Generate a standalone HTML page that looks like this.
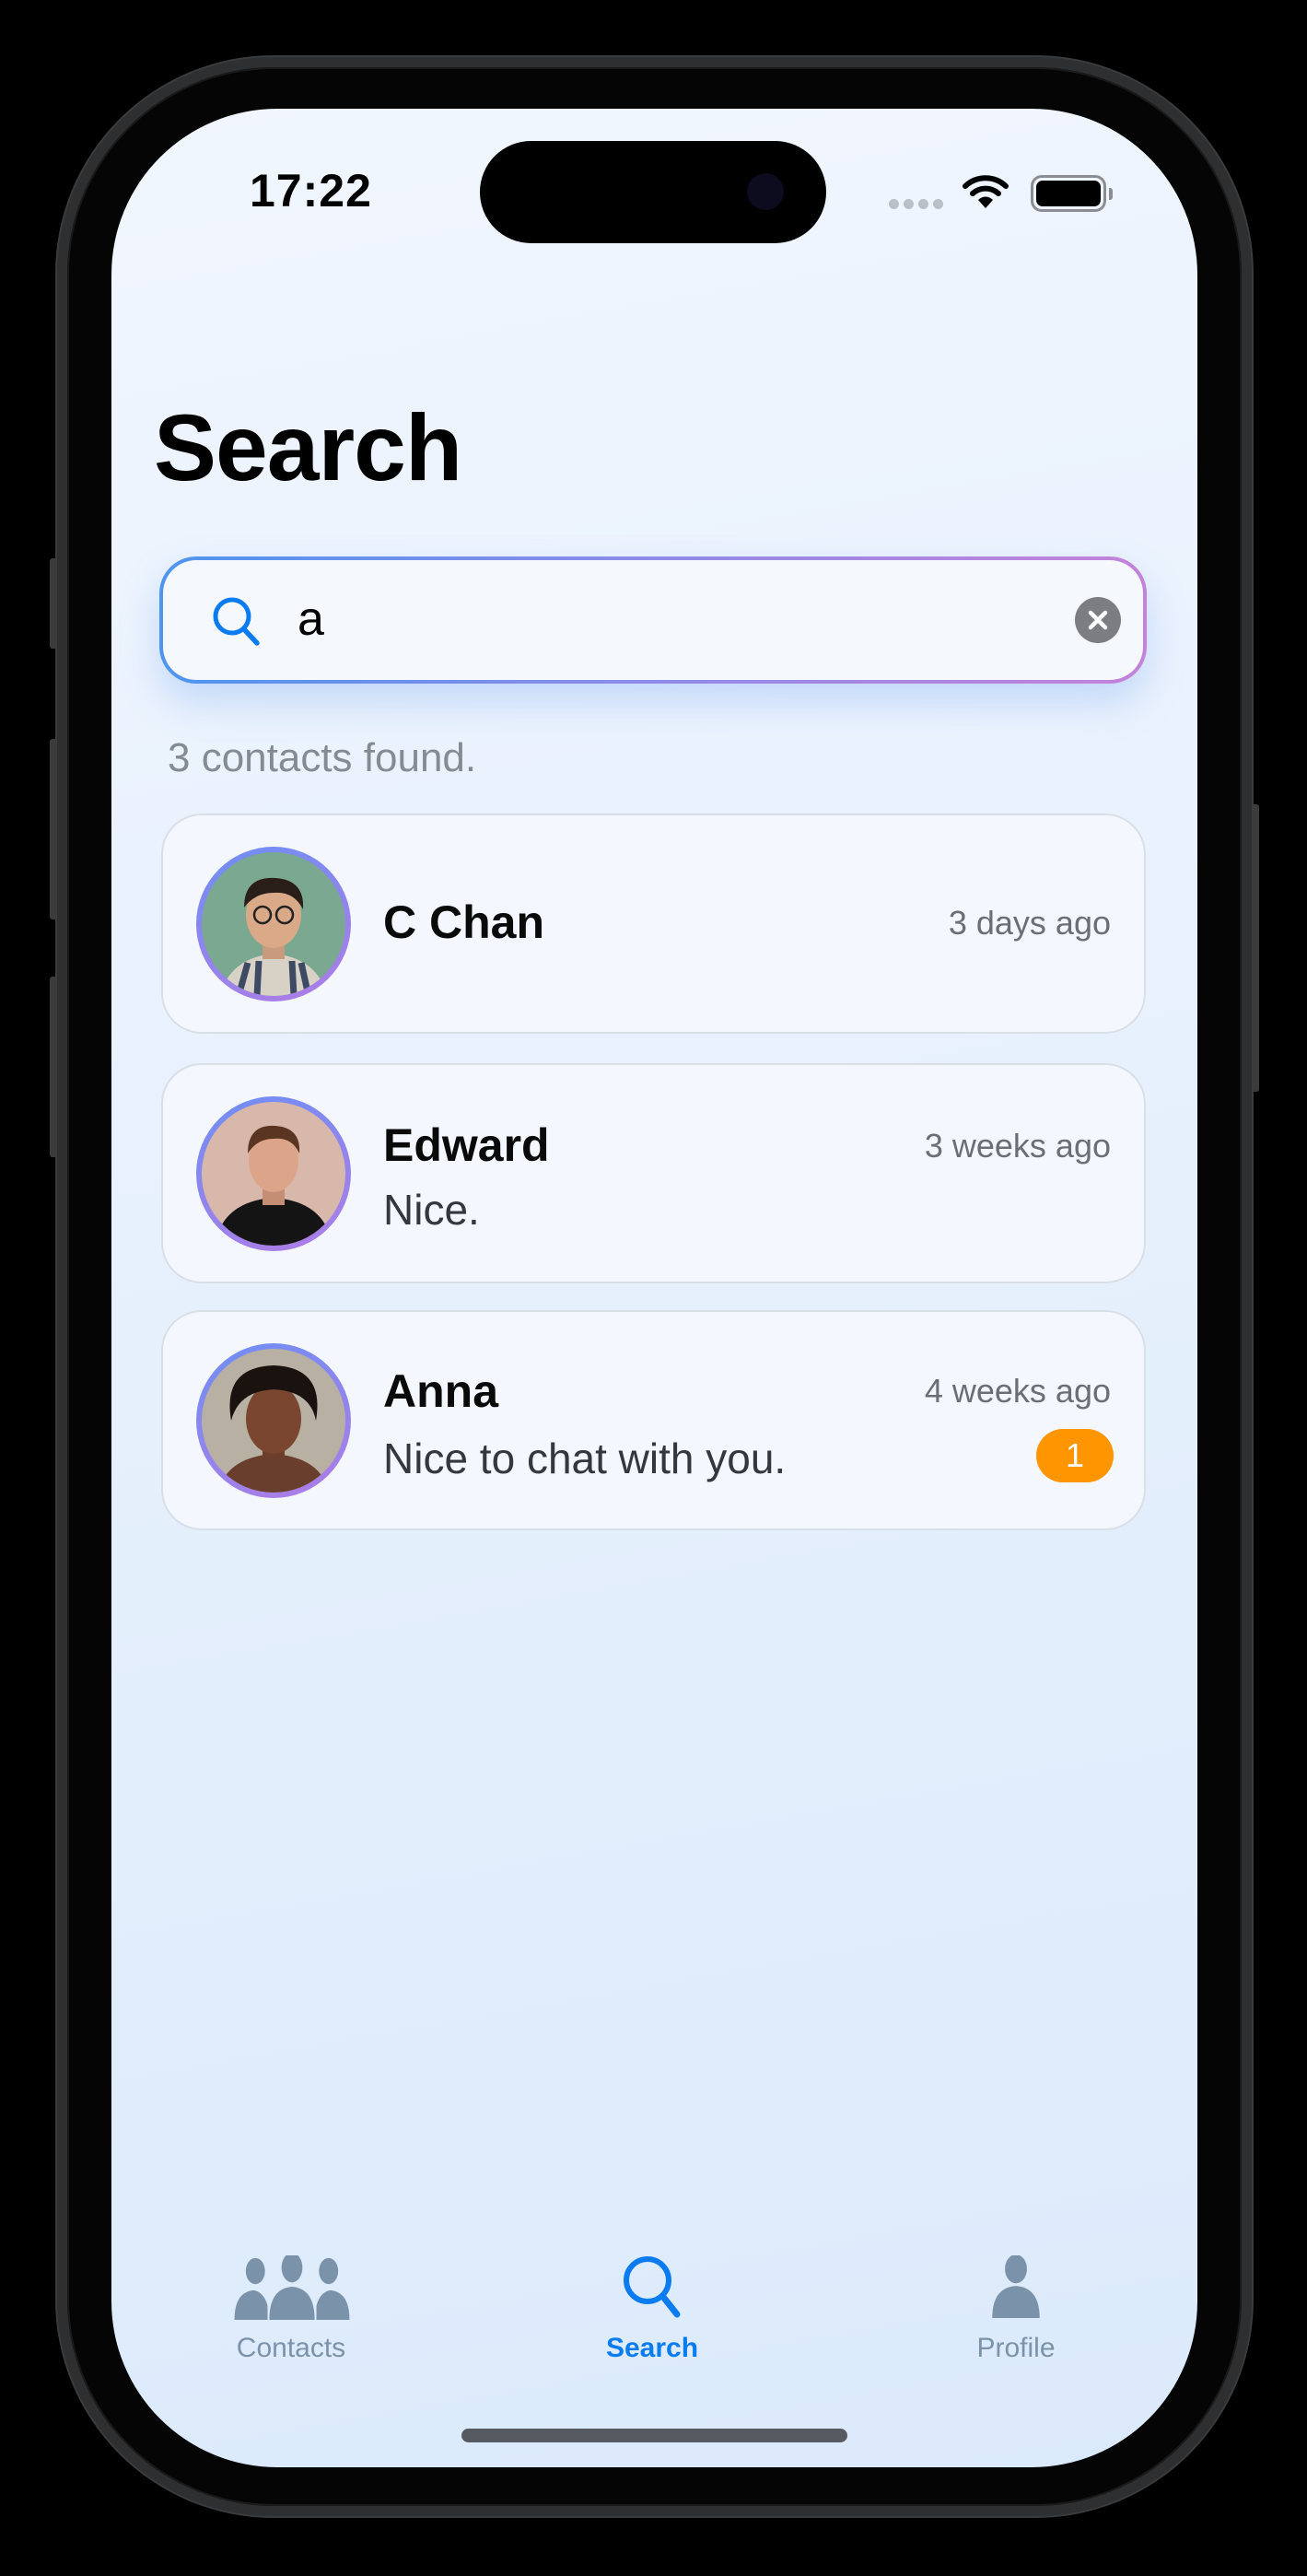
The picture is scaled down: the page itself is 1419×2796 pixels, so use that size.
<!DOCTYPE html>
<html><head><meta charset="utf-8"><style>
*{margin:0;padding:0;box-sizing:border-box}
html,body{width:1419px;height:2796px;background:#000;overflow:hidden;font-family:"Liberation Sans",sans-serif}
.abs{position:absolute}
.frame{left:62px;top:62px;width:1297px;height:2669px;border-radius:235px;background:#050505;border:11px solid #2e2f31;box-shadow:inset 0 0 0 2px #1a1a1a, 0 0 0 2px #3a3b3d}
.screen{left:121px;top:118px;width:1179px;height:2560px;border-radius:180px;background:linear-gradient(170deg,#f1f6fe 0%,#e8f1fd 40%,#dbeafb 100%);overflow:hidden}
.btn{background:#3a3b3d;border-radius:3px}
.card{left:54px;width:1069px;height:239px;border-radius:44px;background:#f4f8fe;border:2px solid #d9dfe7}
.av{left:36px;top:34px;width:168px;height:168px;border-radius:50%;background:linear-gradient(160deg,#6e8ff5,#b07ce6);padding:6px}
.av svg{width:156px;height:156px;border-radius:50%;display:block}
.name{left:239px;font-weight:bold;font-size:50px;color:#0a0a0a}
.time{right:36px;font-size:36px;color:#6a6e75}
.msg{left:239px;font-size:46px;color:#34373c}
.tab{font-size:30px;color:#7b93aa;text-align:center;width:200px}
</style></head><body>
<div class="abs btn" style="left:54px;top:606px;width:10px;height:98px"></div>
<div class="abs btn" style="left:54px;top:802px;width:10px;height:196px"></div>
<div class="abs btn" style="left:54px;top:1060px;width:10px;height:196px"></div>
<div class="abs btn" style="left:1357px;top:873px;width:10px;height:312px"></div>
<div class="abs frame"></div>
<div class="abs screen">
  <div class="abs" style="left:150px;top:60px;font-size:50px;font-weight:bold;color:#000;letter-spacing:1px">17:22</div>
  <div class="abs" style="left:400px;top:35px;width:376px;height:111px;border-radius:56px;background:#000"></div>
  <div class="abs" style="left:690px;top:70px;width:40px;height:40px;border-radius:50%;background:#0c0c1e"></div>
  <div class="abs" style="left:844px;top:98px;display:flex;gap:5px">
    <div style="width:11px;height:11px;border-radius:50%;background:#b9c0c9"></div><div style="width:11px;height:11px;border-radius:50%;background:#b9c0c9"></div><div style="width:11px;height:11px;border-radius:50%;background:#b9c0c9"></div><div style="width:11px;height:11px;border-radius:50%;background:#b9c0c9"></div>
  </div>
  <svg class="abs" style="left:924px;top:70px" width="50" height="40" viewBox="0 0 50 40"><path d="M3 14 A32 32 0 0 1 47 14" stroke="#000" stroke-width="6" fill="none" stroke-linecap="round"/><path d="M11 22 A21 21 0 0 1 39 22" stroke="#000" stroke-width="6" fill="none" stroke-linecap="round"/><path d="M25 38 L17 29 A11 11 0 0 1 33 29 Z" fill="#000"/></svg>
  <div class="abs" style="left:998px;top:72px;width:82px;height:40px;border:3px solid #8a8d92;border-radius:12px;padding:3px"><div style="width:100%;height:100%;background:#000;border-radius:7px"></div></div>
  <div class="abs" style="left:1083px;top:86px;width:4px;height:13px;background:#8a8d92;border-radius:0 3px 3px 0"></div>
  <div class="abs" style="left:46px;top:310px;font-size:102px;font-weight:bold;color:#000;letter-spacing:-1px">Search</div>
  <div class="abs" style="left:52px;top:486px;width:1072px;height:138px;border-radius:40px;background:linear-gradient(90deg,#4e95ef,#8f8be8,#c482da);padding:4px;box-shadow:0 20px 40px rgba(120,170,240,.35)">
    <div style="width:100%;height:100%;border-radius:36px;background:#f5f9fe;position:relative">
      <svg class="abs" style="left:52px;top:38px" width="58" height="58" viewBox="0 0 58 58"><circle cx="23" cy="23" r="18" stroke="#0a7cf0" stroke-width="5" fill="none"/><path d="M36 37 L50 52" stroke="#0a7cf0" stroke-width="5.5" stroke-linecap="round"/></svg>
      <div class="abs" style="left:146px;top:34px;font-size:52px;color:#000">a</div>
      <div class="abs" style="left:990px;top:40px;width:50px;height:50px;border-radius:50%;background:#7b7d80"></div>
      <svg class="abs" style="left:990px;top:40px" width="50" height="50" viewBox="0 0 50 50"><path d="M17 17L33 33M33 17L17 33" stroke="#fff" stroke-width="4.5" stroke-linecap="round"/></svg>
    </div>
  </div>
  <div class="abs" style="left:61px;top:680px;font-size:44px;color:#868b93">3 contacts found.</div>
  <div class="abs card" style="top:765px">
    <div class="abs av"><svg viewBox="0 0 156 156"><rect width="156" height="156" fill="#7aa890"/><path d="M20 156 Q30 115 78 110 Q126 115 136 156Z" fill="#d8d2c6"/><path d="M40 156 L50 120 M60 156 L62 118 M100 156 L98 118 M116 156 L108 120" stroke="#3c4a64" stroke-width="7"/><rect x="66" y="92" width="24" height="24" fill="#c99a7b"/><ellipse cx="78" cy="68" rx="30" ry="36" fill="#d9a988"/><path d="M46 60 Q46 26 80 28 Q112 30 110 62 Q100 42 78 44 Q58 44 46 60Z" fill="#2a1e18"/><circle cx="66" cy="68" r="9" stroke="#222" stroke-width="2.5" fill="none"/><circle cx="90" cy="68" r="9" stroke="#222" stroke-width="2.5" fill="none"/></svg></div>
    <div class="abs name" style="top:87px">C Chan</div>
    <div class="abs time" style="top:96px">3 days ago</div>
  </div>
  <div class="abs card" style="top:1036px">
    <div class="abs av"><svg viewBox="0 0 156 156"><rect width="156" height="156" fill="#d7b8aa"/><path d="M14 156 Q22 108 78 104 Q134 108 142 156Z" fill="#141414"/><rect x="66" y="90" width="24" height="22" fill="#c48e75"/><ellipse cx="78" cy="64" rx="27" ry="34" fill="#dca58a"/><path d="M50 56 Q50 24 80 26 Q108 28 106 56 Q98 38 78 40 Q60 40 50 56Z" fill="#5a3522"/></svg></div>
    <div class="abs name" style="top:58px">Edward</div>
    <div class="abs time" style="top:67px">3 weeks ago</div>
    <div class="abs msg" style="top:130px">Nice.</div>
  </div>
  <div class="abs card" style="top:1304px">
    <div class="abs av"><svg viewBox="0 0 156 156"><rect width="156" height="156" fill="#b9b0a4"/><path d="M18 156 Q26 118 78 114 Q130 118 138 156Z" fill="#6a3e2c"/><rect x="66" y="96" width="24" height="22" fill="#6b3e2a"/><ellipse cx="78" cy="76" rx="30" ry="38" fill="#7a4630"/><path d="M32 78 Q22 20 78 18 Q134 20 124 78 Q118 46 78 44 Q40 46 32 78Z" fill="#1a120e"/></svg></div>
    <div class="abs name" style="top:57px">Anna</div>
    <div class="abs time" style="top:65px">4 weeks ago</div>
    <div class="abs msg" style="top:132px">Nice to chat with you.</div>
    <div class="abs" style="right:33px;top:127px;width:84px;height:58px;border-radius:29px;background:#ff9500;color:#fff;font-size:36px;text-align:center;line-height:58px">1</div>
  </div>
  <svg class="abs" style="left:130px;top:2330px" width="132" height="70" viewBox="0 0 132 74"><ellipse cx="24" cy="18" rx="11" ry="15" fill="#7b93aa"/><ellipse cx="66" cy="14" rx="12" ry="17" fill="#7b93aa"/><ellipse cx="108" cy="18" rx="11" ry="15" fill="#7b93aa"/><path d="M0 74 Q0 42 22 40 Q34 42 38 58 L38 74Z" fill="#7b93aa"/><path d="M132 74 Q132 42 110 40 Q98 42 94 58 L94 74Z" fill="#7b93aa"/><path d="M40 74 Q40 38 66 36 Q92 38 92 74Z" fill="#7b93aa"/></svg>
  <div class="abs tab" style="left:95px;top:2414px">Contacts</div>
  <svg class="abs" style="left:552px;top:2328px" width="72" height="72" viewBox="0 0 72 72"><circle cx="30" cy="29" r="23" stroke="#0a7cf0" stroke-width="6" fill="none"/><path d="M47 47 L62 66" stroke="#0a7cf0" stroke-width="7" stroke-linecap="round"/></svg>
  <div class="abs tab" style="left:487px;top:2414px;color:#0a7cf0;font-weight:bold">Search</div>
  <svg class="abs" style="left:953px;top:2330px" width="58" height="68" viewBox="0 0 60 74"><ellipse cx="30" cy="16" rx="13" ry="17" fill="#7b93aa"/><path d="M2 74 Q2 38 30 36 Q58 38 58 74Z" fill="#7b93aa"/></svg>
  <div class="abs tab" style="left:882px;top:2414px">Profile</div>
  <div class="abs" style="left:380px;top:2518px;width:419px;height:15px;border-radius:8px;background:#565b61"></div>
</div>
</body></html>
